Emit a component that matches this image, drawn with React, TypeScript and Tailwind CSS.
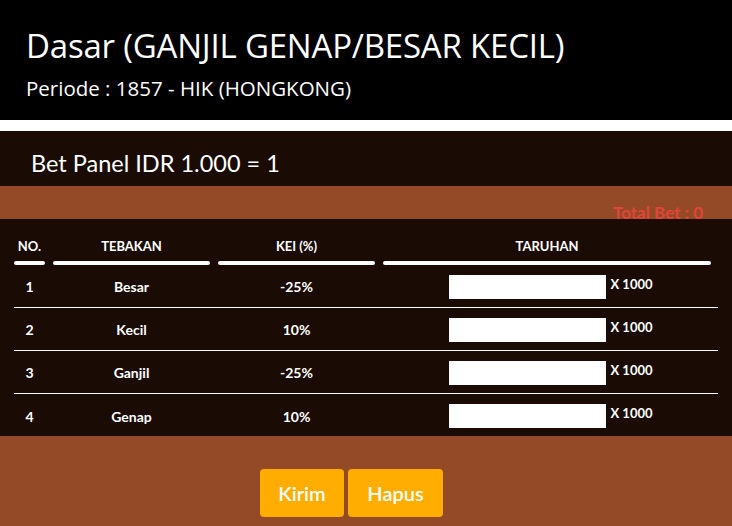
import React from "react";

interface BetRow {
  no: number;
  tebakan: string;
  kei: string;
}

const rows: BetRow[] = [
  { no: 1, tebakan: "Besar", kei: "-25%" },
  { no: 2, tebakan: "Kecil", kei: "10%" },
  { no: 3, tebakan: "Ganjil", kei: "-25%" },
  { no: 4, tebakan: "Genap", kei: "10%" },
];

const cols = "grid grid-cols-[31px_157px_157px_328px] gap-x-2";

export default function App() {
  return (
    <div className="w-[732px] h-[526px] overflow-hidden bg-[#954a27] font-['Lato',sans-serif] text-white">
      <div className="bg-black h-[120px] px-[26px] pt-[26px] font-['Open_Sans',sans-serif]">
        <h1 className="text-[33px] leading-[40px] tracking-[-0.2px]">Dasar (GANJIL GENAP/BESAR KECIL)</h1>
        <p className="text-[20.5px] leading-[26px] mt-[9px]">Periode : 1857 - HIK (HONGKONG)</p>
      </div>
      <div className="h-[11px] bg-white" />
      <div className="bg-[#1a0c04] h-[55px] px-[31px] pt-[18px]">
        <h2 className="text-[23.5px] leading-[28px]">Bet Panel IDR 1.000 = 1</h2>
      </div>
      <div className="h-[33px] relative">
        <span className="absolute right-[29px] top-[17px] text-[17px] leading-[20px] font-bold text-[#e0443a]">Total Bet : 0</span>
      </div>
      <div className="bg-[#1a0c04] h-[217px] px-[14px] pt-[17px]">
        <div className={`${cols} text-[13px] font-bold text-center`}>
          {["NO.", "TEBAKAN", "KEI (%)", "TARUHAN"].map(h => (
            <div key={h} className="flex flex-col items-center">
              <span className="leading-[20px]">{h}</span>
              <span className="mt-[5px] h-[4px] w-full rounded-full bg-white" />
            </div>
          ))}
        </div>
        {rows.map((r, i) => (
          <div
            key={r.no}
            className={`${cols} h-[43px] pt-[1px] items-center text-[14px] font-bold text-center ${i < rows.length - 1 ? "border-b border-white" : ""}`}
          >
            <span>{r.no}</span>
            <span>{r.tebakan}</span>
            <span>{r.kei}</span>
            <div className="flex items-center justify-center gap-[4px] pl-[8px]">
              <input type="text" className="w-[157px] h-[24px] bg-white text-black outline-none" />
              <span className="mb-[4px] text-[13px]">X 1000</span>
            </div>
          </div>
        ))}
      </div>
      <div className="flex gap-[4px] pl-[260px] pt-[33px]">
        <button className="w-[84px] h-[48px] rounded bg-[#ffad00] text-[20px] font-semibold">Kirim</button>
        <button className="w-[95px] h-[48px] rounded bg-[#ffad00] text-[20px] font-semibold">Hapus</button>
      </div>
    </div>
  );
}
